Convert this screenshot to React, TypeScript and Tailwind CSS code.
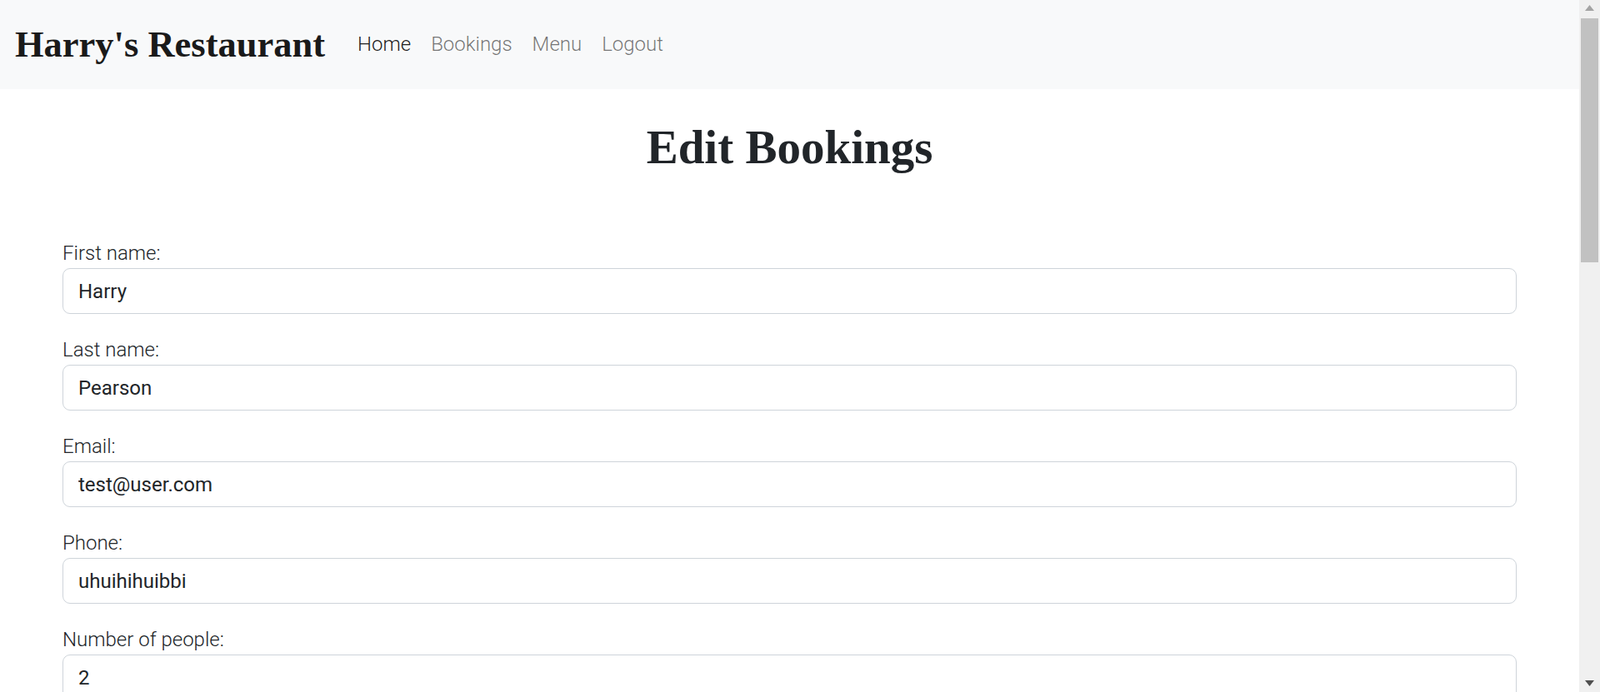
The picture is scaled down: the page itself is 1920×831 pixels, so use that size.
import React from "react";

const fields = [
  { label: "First name:", value: "Harry" },
  { label: "Last name:", value: "Pearson" },
  { label: "Email:", value: "test@user.com" },
  { label: "Phone:", value: "uhuihihuibbi" },
  { label: "Number of people:", value: "2" },
];

const links = [
  { name: "Home", active: true },
  { name: "Bookings", active: false },
  { name: "Menu", active: false },
  { name: "Logout", active: false },
];

function Navbar() {
  return (
    <nav className="h-[107px] bg-[#f8f9fa] flex items-center px-[18px] shrink-0">
      <a className="w-[375px] mr-[24px] whitespace-nowrap text-[44.5px] leading-none font-bold text-[#1a1a1a] font-['Liberation_Serif',serif]">
        Harry's Restaurant
      </a>
      <ul className="flex items-center">
        {links.map((link) => (
          <li key={link.name}>
            <a
              className={`px-[12px] text-[24px] leading-none font-light font-['Roboto',sans-serif] ${
                link.active ? "text-black/90" : "text-black/55"
              }`}
            >
              {link.name}
            </a>
          </li>
        ))}
      </ul>
    </nav>
  );
}

function Scrollbar() {
  return (
    <div className="w-[25px] shrink-0 bg-[#f0f0f0] flex flex-col items-center">
      <svg width="25" height="22" viewBox="0 0 25 22" className="shrink-0">
        <polygon points="7,13 12.5,6 18,13" fill="#a3a3a3" />
      </svg>
      <div className="w-[21px] h-[293px] bg-[#c1c1c1]" />
      <div className="flex-1" />
      <svg width="25" height="16" viewBox="0 0 25 16" className="shrink-0">
        <polygon points="7,2 18,2 12.5,9" fill="#505050" />
      </svg>
    </div>
  );
}

export default function App() {
  return (
    <div className="h-screen w-full flex overflow-hidden bg-white">
      <div className="flex-1 flex flex-col overflow-hidden">
        <Navbar />
        <main className="px-[75px]">
          <h1 className="mt-[34px] text-center text-[57px] leading-[72px] font-bold text-[#212529] font-['Liberation_Serif',serif]">
            Edit Bookings
          </h1>
          <form className="mt-[73px] font-['Roboto',sans-serif]">
            {fields.map((field) => (
              <div key={field.label} className="mb-[25px]">
                <label className="block text-[24px] leading-[36px] font-light text-[#212529]">
                  {field.label}
                </label>
                <input
                  readOnly
                  value={field.value}
                  className="block w-full h-[55px] px-[18px] text-[24px] text-[#212529] bg-white border border-[#ced4da] rounded-[9px] outline-none"
                />
              </div>
            ))}
          </form>
        </main>
      </div>
      <Scrollbar />
    </div>
  );
}
